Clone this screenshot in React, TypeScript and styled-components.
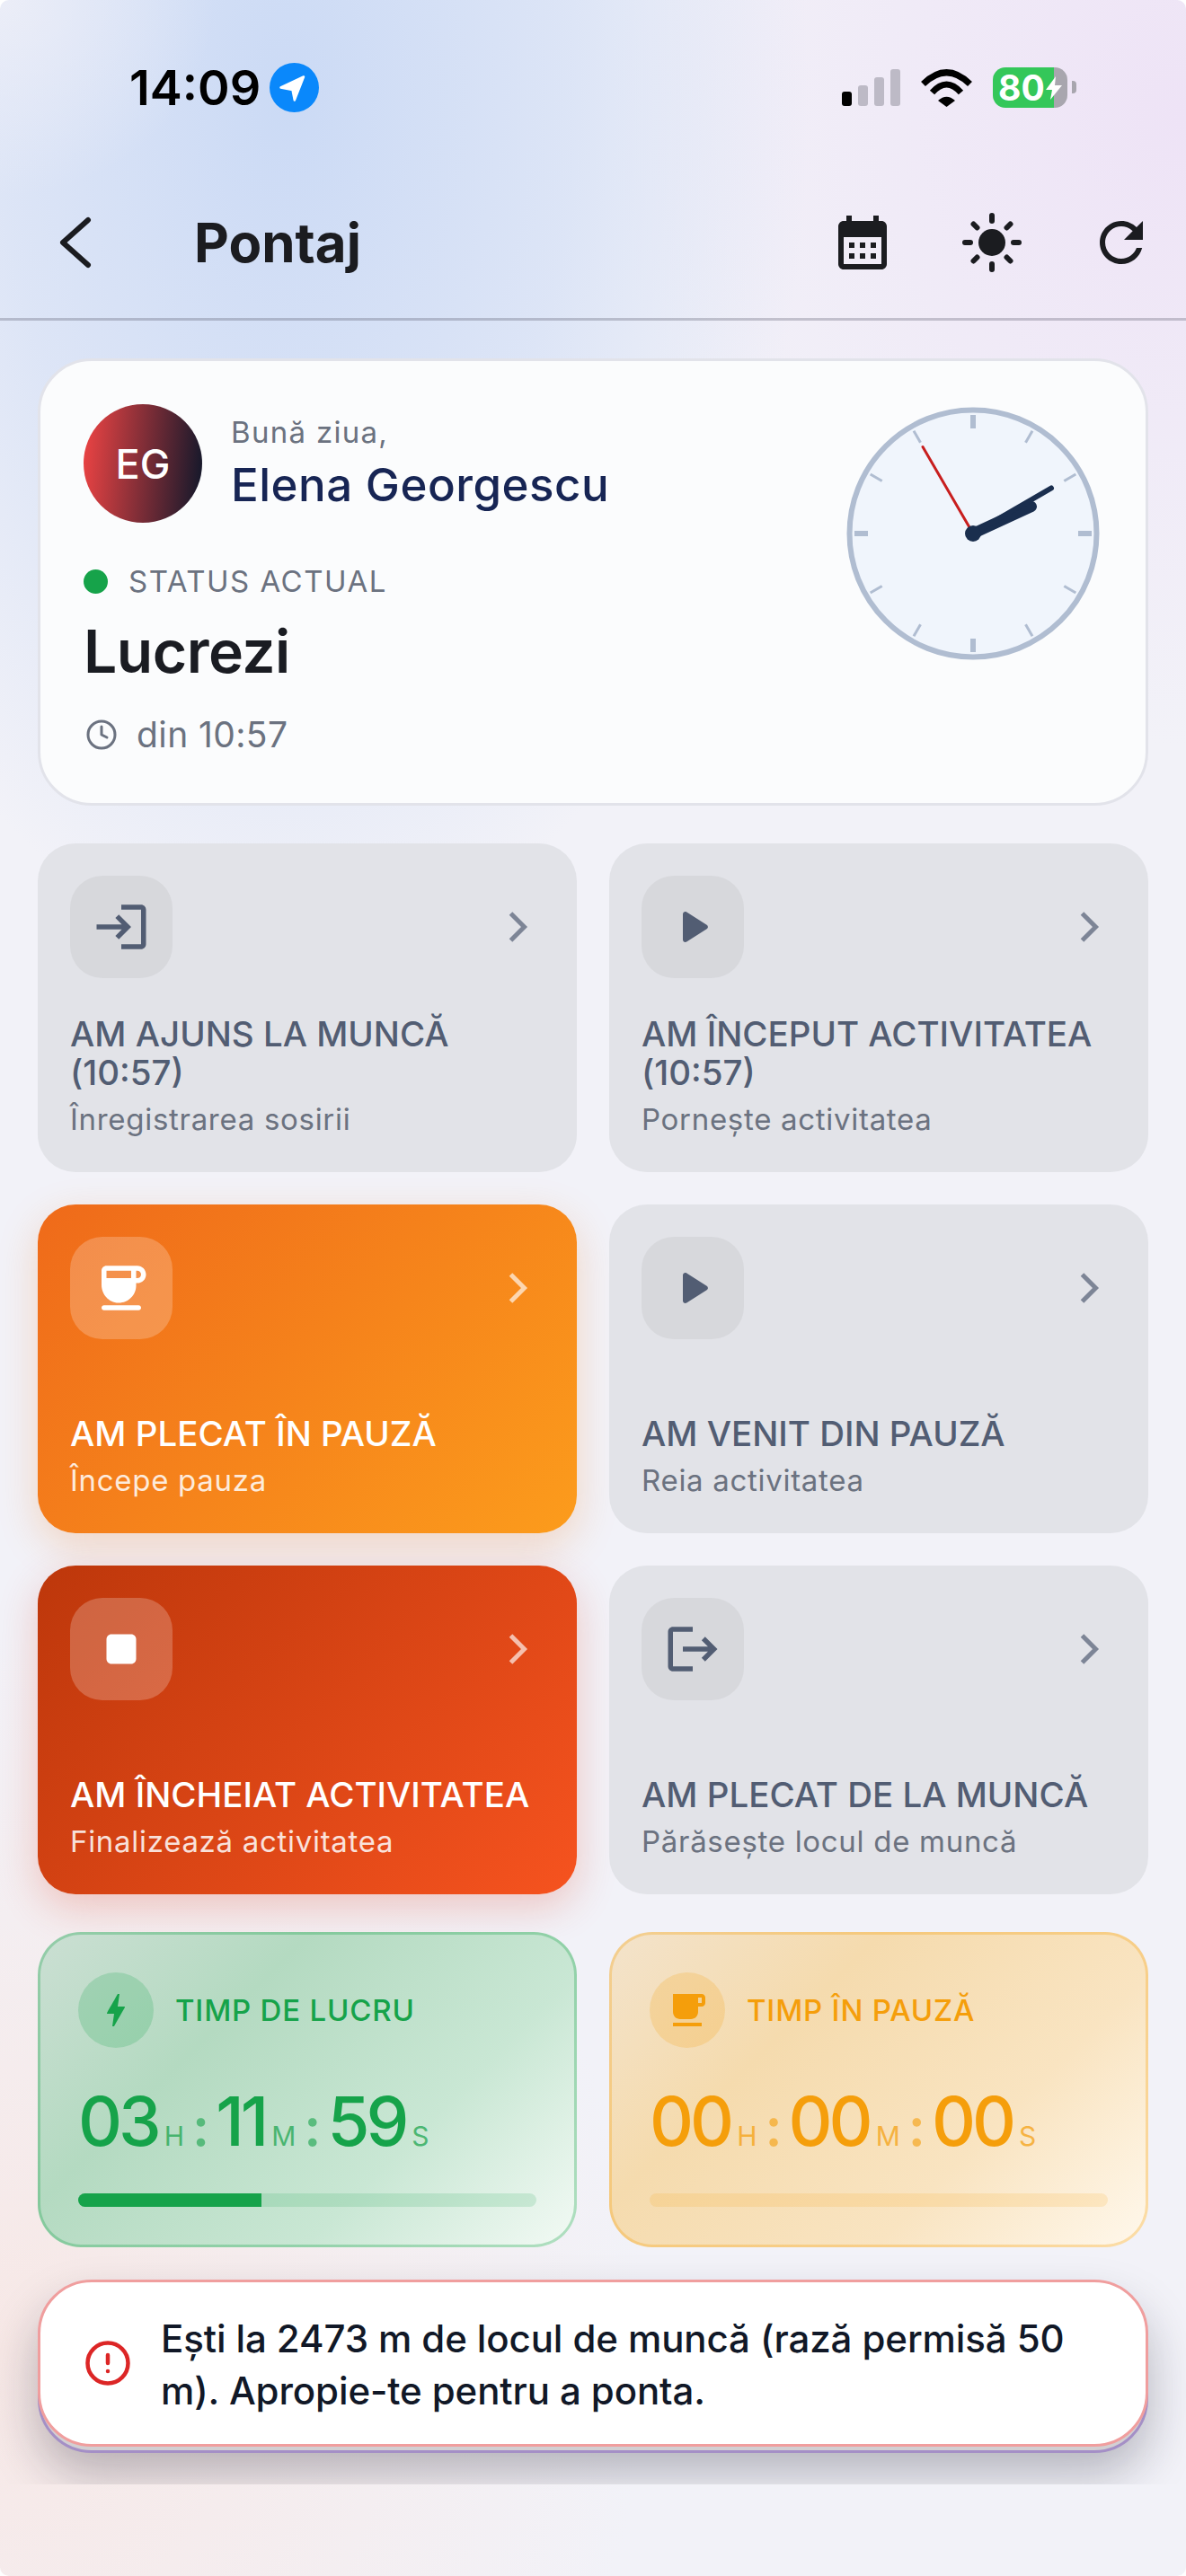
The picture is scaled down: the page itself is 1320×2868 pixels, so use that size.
import React from 'react'
import styled, { createGlobalStyle } from 'styled-components'

const GlobalStyle = createGlobalStyle`
  html, body {
    margin: 0;
    padding: 0;
    background: #ffffff;
  }
  * {
    box-sizing: border-box;
  }
  #root {
    font-family: 'Inter', 'Noto Sans', sans-serif;
  }
`

const Screen = styled.div`
  width: 1320px;
  height: 2868px;
  border-radius: 10px;
  overflow: hidden;
  background:
    radial-gradient(ellipse 240px 220px at 0px 0px, rgba(240, 240, 248, 0.75) 0%, rgba(240, 240, 248, 0) 100%),
    radial-gradient(ellipse 580px 960px at 320px 110px, #cbdaf5 0%, rgba(203, 218, 245, 0.55) 55%, rgba(203, 218, 245, 0) 100%),
    radial-gradient(ellipse 640px 700px at 1320px 130px, #eee3f6 0%, rgba(238, 227, 246, 0) 100%),
    radial-gradient(ellipse 720px 800px at 0px 2620px, #f7e8e6 0%, rgba(247, 232, 230, 0) 100%),
    #f2f2f8;
`

const StatusBar = styled.div`
  height: 186px;
  padding: 9px 122px 0 144px;
  display: flex;
  align-items: center;
  justify-content: space-between;
`

const TimeGroup = styled.div`
  display: flex;
  align-items: center;
  gap: 10px;
`

const Time = styled.span`
  font-size: 54px;
  font-weight: 600;
  line-height: 1;
  color: #000000;
`

const StatusIcons = styled.div`
  display: flex;
  align-items: center;
  gap: 23px;
`

const Signal = styled.div`
  display: flex;
  align-items: flex-end;
  gap: 7px;
  height: 41px;
`

const SignalBar = styled.span<{ $h: number; $on?: boolean }>`
  width: 11px;
  height: ${p => p.$h}px;
  border-radius: 3px;
  background: ${p => (p.$on ? '#000000' : '#bdbac6')};
`

const Battery = styled.div`
  position: relative;
  width: 83px;
  height: 45px;
  border-radius: 14px;
  padding-left: 6px;
  display: flex;
  align-items: center;
  margin-right: 10px;
  background: linear-gradient(90deg, #34c759 82%, #a8a6ae 82%);
  font-size: 39px;
  font-weight: 700;
  line-height: 1;
  color: #ffffff;

  &::after {
    content: '';
    position: absolute;
    right: -10px;
    top: 15px;
    width: 5px;
    height: 14px;
    border-radius: 0 4px 4px 0;
    background: #a8a6ae;
  }
`

const Header = styled.header`
  height: 171px;
  padding: 0 36px 0 48px;
  display: flex;
  align-items: center;
  justify-content: space-between;
  border-bottom: 3px solid rgba(60, 60, 80, 0.26);
`

const HeaderLeft = styled.div`
  display: flex;
  align-items: center;
  gap: 96px;
`

const Title = styled.h1`
  margin: 0;
  font-size: 60px;
  font-weight: 700;
  line-height: 1;
  color: #1b1c20;
`

const HeaderActions = styled.div`
  display: flex;
  align-items: center;
  gap: 72px;
  color: #1b1c20;
`

const Glyph = styled.svg<{ $size: number }>`
  display: block;
  flex: none;
  width: ${p => p.$size}px;
  height: ${p => p.$size}px;
  fill: currentColor;
`

const Main = styled.main`
  height: 2409px;
  padding: 42px 42px 0;
  display: flex;
  flex-direction: column;
  gap: 42px;
  overflow: hidden;
`

const StatusCard = styled.section`
  height: 498px;
  padding: 48px;
  display: flex;
  justify-content: space-between;
  border: 3px solid #e2e3ea;
  border-radius: 60px;
  background: #fbfcfd;
`

const StatusInfo = styled.div`
  display: flex;
  flex-direction: column;
`

const Person = styled.div`
  display: flex;
  align-items: center;
  gap: 32px;
`

const Avatar = styled.div`
  width: 132px;
  height: 132px;
  border-radius: 50%;
  display: flex;
  align-items: center;
  justify-content: center;
  background: linear-gradient(95deg, #f04444 0%, #0f172a 100%);
  font-size: 45px;
  font-weight: 500;
  color: #ffffff;
`

const Greeting = styled.div`
  margin-top: -2px;
  font-size: 33px;
  line-height: 42px;
  letter-spacing: 1.3px;
  color: #6b7280;
`

const Name = styled.div`
  margin-top: 8px;
  font-size: 51px;
  font-weight: 500;
  line-height: 60px;
  letter-spacing: 0.5px;
  color: #172554;
`

const StateRow = styled.div`
  margin-top: 50px;
  display: flex;
  align-items: center;
  gap: 23px;
  font-size: 33px;
  font-weight: 400;
  line-height: 30px;
  letter-spacing: 1.5px;
  color: #6b7280;
`

const Dot = styled.span`
  width: 27px;
  height: 27px;
  border-radius: 50%;
  background: #16a34a;
`

const StateName = styled.div`
  margin-top: 21px;
  font-size: 66px;
  font-weight: 600;
  line-height: 84px;
  letter-spacing: -0.5px;
  color: #1a1c22;
`

const Since = styled.div`
  margin-top: 27px;
  margin-left: 2px;
  display: flex;
  align-items: center;
  gap: 21px;
  font-size: 39px;
  line-height: 48px;
  letter-spacing: 0.4px;
  color: #6b7280;
`

const ClockFace = styled.svg`
  display: block;
  flex: none;
  width: 288px;
  height: 288px;
`

const ActionGrid = styled.div`
  display: grid;
  grid-template-columns: 600px 600px;
  grid-auto-rows: 366px;
  gap: 36px;
`

type Tone = 'idle' | 'break' | 'stop'

const toneBackground: Record<Tone, string> = {
  idle: '#e2e3e8',
  break: 'linear-gradient(135deg, #ef6a1a 0%, #fc9c1c 100%)',
  stop: 'linear-gradient(135deg, #bd370b 0%, #f6531f 100%)',
}

const toneShadow: Record<Tone, string> = {
  idle: 'none',
  break: '0 15px 45px rgba(239, 120, 30, 0.24)',
  stop: '0 15px 45px rgba(220, 60, 30, 0.24)',
}

const ActionButton = styled.div<{ $tone: Tone }>`
  padding: 36px 36px 38px;
  display: flex;
  flex-direction: column;
  border-radius: 42px;
  background: ${p => toneBackground[p.$tone]};
  box-shadow: ${p => toneShadow[p.$tone]};
  color: ${p => (p.$tone === 'idle' ? '#525d73' : '#ffffff')};
`

const ActionTop = styled.div`
  display: flex;
  align-items: center;
  justify-content: space-between;
`

const ActionIcon = styled.div<{ $tone: Tone }>`
  width: 114px;
  height: 114px;
  border-radius: 36px;
  display: flex;
  align-items: center;
  justify-content: center;
  background: ${p => (p.$tone === 'idle' ? '#d7d8dc' : 'rgba(255, 255, 255, 0.22)')};
`

const Chevron = styled.svg<{ $tone: Tone }>`
  display: block;
  width: 60px;
  height: 60px;
  fill: none;
  stroke: ${p => (p.$tone === 'idle' ? 'rgba(82, 93, 115, 0.7)' : 'rgba(255, 255, 255, 0.65)')};
  stroke-width: 2;
`

const ActionText = styled.div`
  margin-top: auto;
`

const ActionTitle = styled.div`
  font-size: 38.5px;
  font-weight: 500;
  line-height: 43px;
`

const ActionHint = styled.div<{ $tone: Tone }>`
  margin-top: 9px;
  font-size: 33px;
  line-height: 42px;
  letter-spacing: 0.7px;
  color: ${p => (p.$tone === 'idle' ? '#6b7280' : 'rgba(255, 255, 255, 0.85)')};
`

const Lower = styled.div`
  display: flex;
  flex-direction: column;
  gap: 36px;
`

const TimerRow = styled.div`
  display: grid;
  grid-template-columns: 600px 600px;
  gap: 36px;
`

type Accent = 'work' | 'pause'

const accentColor: Record<Accent, string> = {
  work: '#16a34a',
  pause: '#f59e0b',
}

const accentBackground: Record<Accent, string> = {
  work: 'linear-gradient(135deg, #cbdfd3 0%, #b4dac1 32%, #c9e7d4 68%, #f3faf5 100%)',
  pause: 'linear-gradient(135deg, #f3e3cb 0%, #f5dbae 32%, #f9e4c1 68%, #fff8ec 100%)',
}

const TimerCard = styled.section<{ $accent: Accent }>`
  height: 351px;
  padding: 42px;
  border: 3px solid ${p => (p.$accent === 'work' ? 'rgba(22, 163, 74, 0.3)' : 'rgba(245, 158, 11, 0.3)')};
  border-radius: 48px;
  background: ${p => accentBackground[p.$accent]};
  background-origin: border-box;
  color: ${p => accentColor[p.$accent]};
`

const TimerHead = styled.div`
  display: flex;
  align-items: center;
  gap: 24px;
  font-size: 33px;
  font-weight: 500;
  letter-spacing: 0.8px;
`

const TimerBadge = styled.div<{ $accent: Accent }>`
  width: 84px;
  height: 84px;
  border-radius: 50%;
  display: flex;
  align-items: center;
  justify-content: center;
  background: ${p => (p.$accent === 'work' ? 'rgba(22, 163, 74, 0.2)' : 'rgba(245, 158, 11, 0.2)')};
`

const Digits = styled.div`
  margin-top: 36px;
  height: 90px;
  display: flex;
  align-items: baseline;
`

const DigitPair = styled.span`
  font-size: 76px;
  font-weight: 500;
  line-height: 90px;
  letter-spacing: -4px;
`

const Unit = styled.span`
  margin-left: 7px;
  font-size: 30px;
  font-weight: 400;
  opacity: 0.7;
`

const Colon = styled.span`
  margin: 0 7px 0 9px;
  font-size: 60px;
  font-weight: 600;
  opacity: 0.6;
`

const Track = styled.div<{ $accent: Accent }>`
  margin-top: 36px;
  height: 15px;
  border-radius: 9px;
  overflow: hidden;
  background: ${p => (p.$accent === 'work' ? 'rgba(22, 163, 74, 0.15)' : 'rgba(245, 158, 11, 0.15)')};
`

const Fill = styled.div<{ $accent: Accent }>`
  height: 100%;
  background: ${p => accentColor[p.$accent]};
`

const AlertStack = styled.div`
  position: relative;
  isolation: isolate;

  &::before {
    content: '';
    position: absolute;
    z-index: -1;
    inset: 6px 0 -7px;
    border: 3px solid #a48fc6;
    border-radius: 60px;
    background: #d2cfd2;
    box-shadow: 0 24px 54px rgba(20, 20, 40, 0.28);
  }
`

const AlertBox = styled.div`
  height: 186px;
  padding: 0 48px;
  display: flex;
  align-items: center;
  gap: 32px;
  border: 3px solid #f09e9e;
  border-radius: 60px;
  background: #ffffff;
`

const AlertIcon = styled.svg`
  display: block;
  flex: none;
  width: 54px;
  height: 54px;
  fill: none;
  stroke: #dc2626;
  stroke-width: 2;
  stroke-linecap: round;
`

const AlertText = styled.div`
  padding-top: 3px;
  font-size: 42px;
  font-weight: 500;
  line-height: 58px;
  letter-spacing: -0.1px;
  color: #111827;
`

// material icon paths, 24 unit grid
const ICONS = {
  calendar:
    'M19 4h-1V2h-2v2H8V2H6v2H5c-1.1 0-2 .9-2 2v14c0 1.1.9 2 2 2h14c1.1 0 2-.9 2-2V6c0-1.1-.9-2-2-2zm0 16H5V10h14v10zM9 14H7v-2h2v2zm4 0h-2v-2h2v2zm4 0h-2v-2h2v2zm-8 4H7v-2h2v2zm4 0h-2v-2h2v2zm4 0h-2v-2h2v2z',
  refresh:
    'M17.65 6.35C16.2 4.9 14.21 4 12 4c-4.42 0-7.99 3.58-7.99 8s3.57 8 7.99 8c3.73 0 6.84-2.55 7.73-6h-2.08c-.82 2.33-3.04 4-5.65 4-3.31 0-6-2.69-6-6s2.69-6 6-6c1.66 0 3.14.69 4.22 1.78L13 11h7V4l-2.35 2.35z',
  login:
    'M11 7L9.6 8.4l2.6 2.6H2v2h10.2l-2.6 2.6L11 17l5-5-5-5zm9 12h-8v2h8c1.1 0 2-.9 2-2V5c0-1.1-.9-2-2-2h-8v2h8v14z',
  logout:
    'M17 7l-1.41 1.41L18.17 11H8v2h10.17l-2.58 2.58L17 17l5-5zM4 5h8V3H4c-1.1 0-2 .9-2 2v14c0 1.1.9 2 2 2h8v-2H4V5z',
  play: 'M8 6.82v10.36c0 .79.87 1.27 1.54.84l8.14-5.18c.62-.39.62-1.29 0-1.69L9.54 5.98C8.87 5.55 8 6.03 8 6.82z',
  stop: 'M8 6h8c1.1 0 2 .9 2 2v8c0 1.1-.9 2-2 2H8c-1.1 0-2-.9-2-2V8c0-1.1.9-2 2-2z',
  coffee:
    'M18.5 3H6c-1.1 0-2 .9-2 2v5.71c0 3.83 2.95 7.18 6.78 7.29 3.96.12 7.22-3.06 7.22-7v-1h.5c1.93 0 3.5-1.57 3.5-3.5S20.43 3 18.5 3zM16 5v3H6V5h10zm2.5 3H18V5h.5c.83 0 1.5.67 1.5 1.5S19.33 8 18.5 8zM5 19h14c.55 0 1 .45 1 1s-.45 1-1 1H5c-.55 0-1-.45-1-1s.45-1 1-1z',
  cafe: 'M20 3H4v10c0 2.21 1.79 4 4 4h6c2.21 0 4-1.79 4-4v-3h2c1.11 0 2-.9 2-2V5c0-1.11-.89-2-2-2zm0 5h-2V5h2v3zM4 19h16v2H4z',
  bolt: 'M11 21h-1l1-7H7.5c-.58 0-.57-.32-.38-.66.19-.34.05-.08.07-.12C8.48 10.94 10.42 7.54 13 3h1l-1 7h3.5c.49 0 .56.33.47.51l-.07.15C12.96 17.55 11 21 11 21z',
}

type IconName = keyof typeof ICONS

const Icon = ({ name, size }: { name: IconName; size: number }) => (
  <Glyph $size={size} viewBox="0 0 24 24">
    <path d={ICONS[name]} />
  </Glyph>
)

const LocationBadge = () => (
  <svg width="55" height="55" viewBox="0 0 55 55" style={{ display: 'block' }}>
    <circle cx="27.5" cy="27.5" r="27.5" fill="#0a88fb" />
    <path
      d="M38 15.5 L12.5 27.5 L25.5 30 L27.8 41.5 Z"
      fill="#fff"
      stroke="#fff"
      strokeWidth="2.5"
      strokeLinejoin="round"
    />
  </svg>
)

const WifiIcon = () => (
  <svg width="57" height="42" viewBox="0 0 57 42" style={{ display: 'block' }}>
    <path d="M2.5 16.5 Q28.5 -9 54.5 16.5" fill="none" stroke="#000" strokeWidth="7" />
    <path d="M12.5 26 Q28.5 8 44.5 26" fill="none" stroke="#000" strokeWidth="7" />
    <path d="M19 35 Q28.5 26.5 38 35 L28.5 42 Z" fill="#000" />
  </svg>
)

const BackIcon = () => (
  <svg width="72" height="72" viewBox="0 0 72 72" style={{ display: 'block' }}>
    <path
      d="M50 11 L22 36 L50 61"
      fill="none"
      stroke="#1b1c20"
      strokeWidth="6"
      strokeLinecap="round"
      strokeLinejoin="round"
    />
  </svg>
)

const SunIcon = () => (
  <svg width="72" height="72" viewBox="0 0 72 72" style={{ display: 'block' }}>
    <circle cx="36" cy="36" r="15" fill="currentColor" />
    <g stroke="currentColor" strokeWidth="6" strokeLinecap="round">
      <path d="M36 6V12M36 60V66M6 36H12M60 36H66" />
      <path d="M15.5 15.5L19.5 19.5M52.5 52.5L56.5 56.5M15.5 56.5L19.5 52.5M52.5 19.5L56.5 15.5" />
    </g>
  </svg>
)

const ClockIcon = () => (
  <svg
    width="36"
    height="36"
    viewBox="0 0 24 24"
    fill="none"
    stroke="#6b7280"
    strokeWidth="2"
    strokeLinecap="round"
    strokeLinejoin="round"
    style={{ display: 'block' }}
  >
    <circle cx="12" cy="12" r="10" />
    <path d="M12 6v6l4 2" />
  </svg>
)

const Clock = () => {
  const ticks = Array.from({ length: 12 }, (_, i) => i * 30)
  return (
    <ClockFace viewBox="0 0 288 288">
      <circle cx="144" cy="144" r="137.5" fill="#f0f5fc" stroke="#b0bdd1" strokeWidth="6" />
      {ticks.map(a => (
        <line
          key={a}
          x1="144"
          y1="12"
          x2="144"
          y2="27"
          stroke="#b0bdd1"
          strokeWidth={a % 90 === 0 ? 6 : 3}
          transform={`rotate(${a} 144 144)`}
        />
      ))}
      <line x1="144" y1="144" x2="88" y2="47.5" stroke="#c81e1e" strokeWidth="3" strokeLinecap="round" />
      <line x1="144" y1="144" x2="209" y2="114" stroke="#1a2e4e" strokeWidth="12" strokeLinecap="round" />
      <line x1="144" y1="144" x2="231" y2="93.5" stroke="#1a2e4e" strokeWidth="6" strokeLinecap="round" />
      <circle cx="144" cy="144" r="9" fill="#1a2e4e" />
    </ClockFace>
  )
}

const actions: { title: string; hint: string; icon: IconName; tone: Tone }[] = [
  { title: 'AM AJUNS LA MUNCĂ (10:57)', hint: 'Înregistrarea sosirii', icon: 'login', tone: 'idle' },
  { title: 'AM ÎNCEPUT ACTIVITATEA (10:57)', hint: 'Pornește activitatea', icon: 'play', tone: 'idle' },
  { title: 'AM PLECAT ÎN PAUZĂ', hint: 'Începe pauza', icon: 'coffee', tone: 'break' },
  { title: 'AM VENIT DIN PAUZĂ', hint: 'Reia activitatea', icon: 'play', tone: 'idle' },
  { title: 'AM ÎNCHEIAT ACTIVITATEA', hint: 'Finalizează activitatea', icon: 'stop', tone: 'stop' },
  { title: 'AM PLECAT DE LA MUNCĂ', hint: 'Părăsește locul de muncă', icon: 'logout', tone: 'idle' },
]

const timers: { label: string; icon: IconName; accent: Accent; parts: [string, string, string]; progress: number }[] = [
  { label: 'TIMP DE LUCRU', icon: 'bolt', accent: 'work', parts: ['03', '11', '59'], progress: 40 },
  { label: 'TIMP ÎN PAUZĂ', icon: 'cafe', accent: 'pause', parts: ['00', '00', '00'], progress: 0 },
]

export default function App() {
  return (
    <Screen>
      <GlobalStyle />
      <StatusBar>
        <TimeGroup>
          <Time>14:09</Time>
          <LocationBadge />
        </TimeGroup>
        <StatusIcons>
          <Signal>
            <SignalBar $h={16} $on />
            <SignalBar $h={23} />
            <SignalBar $h={32} />
            <SignalBar $h={41} />
          </Signal>
          <WifiIcon />
          <Battery>
            80
            <svg width="20" height="26" viewBox="0 0 20 26" style={{ display: 'block' }}>
              <path d="M12 0 L1 15 H8 L6 26 L19 10 H11 Z" fill="#fff" />
            </svg>
          </Battery>
        </StatusIcons>
      </StatusBar>

      <Header>
        <HeaderLeft>
          <BackIcon />
          <Title>Pontaj</Title>
        </HeaderLeft>
        <HeaderActions>
          <Icon name="calendar" size={72} />
          <SunIcon />
          <Icon name="refresh" size={72} />
        </HeaderActions>
      </Header>

      <Main>
        <StatusCard>
          <StatusInfo>
            <Person>
              <Avatar>EG</Avatar>
              <div>
                <Greeting>Bună ziua,</Greeting>
                <Name>Elena Georgescu</Name>
              </div>
            </Person>
            <StateRow>
              <Dot />
              STATUS ACTUAL
            </StateRow>
            <StateName>Lucrezi</StateName>
            <Since>
              <ClockIcon />
              din 10:57
            </Since>
          </StatusInfo>
          <Clock />
        </StatusCard>

        <ActionGrid>
          {actions.map(a => (
            <ActionButton key={a.title} $tone={a.tone}>
              <ActionTop>
                <ActionIcon $tone={a.tone}>
                  <Icon name={a.icon} size={66} />
                </ActionIcon>
                <Chevron $tone={a.tone} viewBox="0 0 24 24">
                  <path d="M9 18l6-6-6-6" />
                </Chevron>
              </ActionTop>
              <ActionText>
                <ActionTitle>{a.title}</ActionTitle>
                <ActionHint $tone={a.tone}>{a.hint}</ActionHint>
              </ActionText>
            </ActionButton>
          ))}
        </ActionGrid>

        <Lower>
          <TimerRow>
            {timers.map(t => (
              <TimerCard key={t.label} $accent={t.accent}>
                <TimerHead>
                  <TimerBadge $accent={t.accent}>
                    <Icon name={t.icon} size={48} />
                  </TimerBadge>
                  {t.label}
                </TimerHead>
                <Digits>
                  <DigitPair>{t.parts[0]}</DigitPair>
                  <Unit>H</Unit>
                  <Colon>:</Colon>
                  <DigitPair>{t.parts[1]}</DigitPair>
                  <Unit>M</Unit>
                  <Colon>:</Colon>
                  <DigitPair>{t.parts[2]}</DigitPair>
                  <Unit>S</Unit>
                </Digits>
                <Track $accent={t.accent}>
                  <Fill $accent={t.accent} style={{ width: `${t.progress}%` }} />
                </Track>
              </TimerCard>
            ))}
          </TimerRow>

          <AlertStack>
            <AlertBox>
              <AlertIcon viewBox="0 0 24 24">
                <circle cx="12" cy="12" r="10" />
                <path d="M12 8v4M12 16h.01" />
              </AlertIcon>
              <AlertText>Ești la 2473 m de locul de muncă (rază permisă 50 m). Apropie-te pentru a ponta.</AlertText>
            </AlertBox>
          </AlertStack>
        </Lower>
      </Main>
    </Screen>
  )
}
